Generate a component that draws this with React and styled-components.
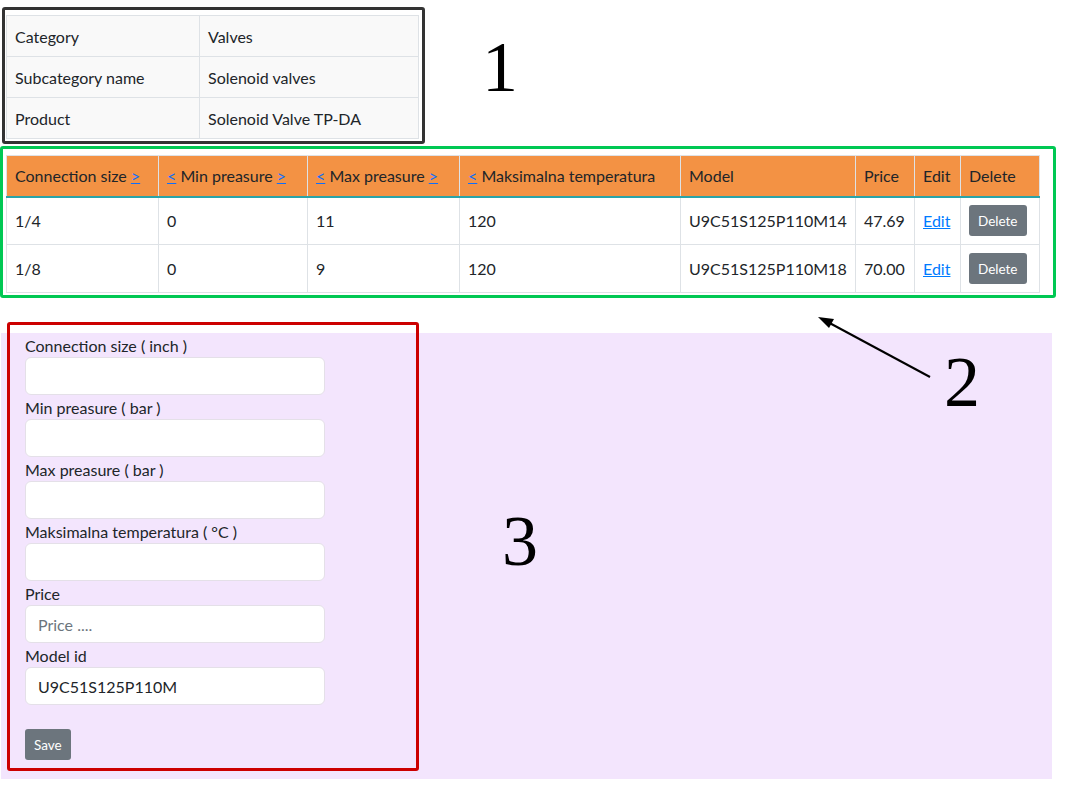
import React from 'react';
import styled, { createGlobalStyle } from 'styled-components';

const GlobalStyle = createGlobalStyle`
  body {
    margin: 0;
    background: #ffffff;
    font-family: Lato, "Noto Sans", sans-serif;
    font-size: 16px;
    color: #212529;
  }
  * { box-sizing: border-box; }
`;

const Page = styled.div`
  position: relative;
  width: 1071px;
  height: 797px;
  padding-top: 7px;
`;

const TopRow = styled.div`
  display: flex;
  align-items: flex-start;
  padding-left: 2px;
`;

const Marker = styled.div`
  font-family: "Liberation Serif", "DejaVu Serif", serif;
  font-size: ${p => p.size || 72}px;
  line-height: 1;
  color: #000;
  margin-left: ${p => p.left || 0}px;
  margin-top: ${p => p.top || 0}px;
`;

const InfoBox = styled.div`
  border: 3px solid #333;
  border-radius: 3px;
  padding: 5px 3px 2px 1px;
`;

const InfoTable = styled.table`
  border-collapse: collapse;
  background: #f9f9f9;
  width: 413px;
  td {
    border: 1px solid #dee2e6;
    padding: 0 8px;
    height: 41px;
    vertical-align: middle;
  }
  td:first-child { width: 193px; }
`;

const ProductBox = styled.div`
  margin-top: 2px;
  width: 1056px;
  border: 3px solid #00c853;
  border-radius: 3px;
  padding: 6px 14px 2px 3px;
`;

const ProductTable = styled.table`
  border-collapse: collapse;
  table-layout: fixed;
  width: 1033px;
  th, td {
    border: 1px solid #dee2e6;
    padding: 0 8px;
    text-align: left;
    vertical-align: middle;
    white-space: nowrap;
  }
  th {
    background: #f39244;
    font-weight: 400;
    height: 41px;
    border-bottom: 2px solid #2aa3a8;
  }
  td { height: 48px; background: #fff; }
`;

const SortLink = styled.a`
  color: #0d6efd;
  text-decoration: underline;
  cursor: pointer;
`;

const EditLink = styled.a`
  color: #007bff;
  text-decoration: underline;
  cursor: pointer;
`;

const SmallButton = styled.button`
  background: #6c757d;
  color: #fff;
  border: none;
  border-radius: 3px;
  font-family: inherit;
  font-size: 13.5px;
  height: 31px;
  padding: 0 ${p => p.pad || 9}px;
  cursor: pointer;
`;

const FormArea = styled.div`
  display: flex;
  align-items: flex-start;
  margin: 35px 0 0 1px;
  width: 1051px;
  height: 446px;
  background: #f3e5fd;
  padding: 0 0 8px 6px;
`;

const FormBox = styled.div`
  margin-top: -11px;
  width: 412px;
  height: 449px;
  border: 3px solid #cc0000;
  border-radius: 3px;
  padding: 9px 15px 0;
  display: flex;
  flex-direction: column;
`;

const Field = styled.div`
  display: flex;
  flex-direction: column;
`;

const Label = styled.label`
  line-height: 23px;
  height: 23px;
`;

const Input = styled.input`
  width: 300px;
  height: 38px;
  margin-bottom: 1px;
  border: 1px solid #e4e0e8;
  border-radius: 6px;
  background: #fff;
  padding: 0 12px;
  font-family: inherit;
  font-size: 16px;
  color: #212529;
  outline: none;
  &::placeholder { color: #6c757d; }
`;

const SaveRow = styled.div`
  margin-top: 23px;
`;

const ArrowLayer = styled.svg`
  position: absolute;
  left: 810px;
  top: 310px;
  overflow: visible;
`;

const FloatingMarker = styled(Marker)`
  position: absolute;
  left: 944px;
  top: 346px;
`;

const rows = [
  { size: '1/4', min: '0', max: '11', temp: '120', model: 'U9C51S125P110M14', price: '47.69' },
  { size: '1/8', min: '0', max: '9', temp: '120', model: 'U9C51S125P110M18', price: '70.00' },
];

const fields = [
  { label: 'Connection size ( inch )' },
  { label: 'Min preasure ( bar )' },
  { label: 'Max preasure ( bar )' },
  { label: 'Maksimalna temperatura ( °C )' },
  { label: 'Price', placeholder: 'Price ....' },
  { label: 'Model id', value: 'U9C51S125P110M' },
];

export default function App() {
  return (
    <Page>
      <GlobalStyle />
      <TopRow>
        <InfoBox>
          <InfoTable>
            <tbody>
              <tr><td>Category</td><td>Valves</td></tr>
              <tr><td>Subcategory name</td><td>Solenoid valves</td></tr>
              <tr><td>Product</td><td>Solenoid Valve TP-DA</td></tr>
            </tbody>
          </InfoTable>
        </InfoBox>
        <Marker left={57} top={24}>1</Marker>
      </TopRow>

      <ProductBox>
        <ProductTable>
          <colgroup>
            <col style={{ width: 152 }} />
            <col style={{ width: 149 }} />
            <col style={{ width: 152 }} />
            <col style={{ width: 221 }} />
            <col style={{ width: 175 }} />
            <col style={{ width: 59 }} />
            <col style={{ width: 46 }} />
            <col style={{ width: 79 }} />
          </colgroup>
          <thead>
            <tr>
              <th>Connection size <SortLink>&gt;</SortLink></th>
              <th><SortLink>&lt;</SortLink> Min preasure <SortLink>&gt;</SortLink></th>
              <th><SortLink>&lt;</SortLink> Max preasure <SortLink>&gt;</SortLink></th>
              <th><SortLink>&lt;</SortLink> Maksimalna temperatura</th>
              <th>Model</th>
              <th>Price</th>
              <th>Edit</th>
              <th>Delete</th>
            </tr>
          </thead>
          <tbody>
            {rows.map(r => (
              <tr key={r.model}>
                <td>{r.size}</td>
                <td>{r.min}</td>
                <td>{r.max}</td>
                <td>{r.temp}</td>
                <td>{r.model}</td>
                <td>{r.price}</td>
                <td><EditLink>Edit</EditLink></td>
                <td><SmallButton>Delete</SmallButton></td>
              </tr>
            ))}
          </tbody>
        </ProductTable>
      </ProductBox>

      <ArrowLayer width="130" height="80">
        <line x1="120" y1="67" x2="14" y2="10" stroke="#000" strokeWidth="2" />
        <polygon points="8,7 24,9 19,18" fill="#000" />
      </ArrowLayer>
      <FloatingMarker>2</FloatingMarker>

      <FormArea>
        <FormBox>
          {fields.map(f => (
            <Field key={f.label}>
              <Label>{f.label}</Label>
              <Input placeholder={f.placeholder} defaultValue={f.value} />
            </Field>
          ))}
          <SaveRow>
            <SmallButton pad={9}>Save</SmallButton>
          </SaveRow>
        </FormBox>
        <Marker left={83} top={172}>3</Marker>
      </FormArea>
    </Page>
  );
}
